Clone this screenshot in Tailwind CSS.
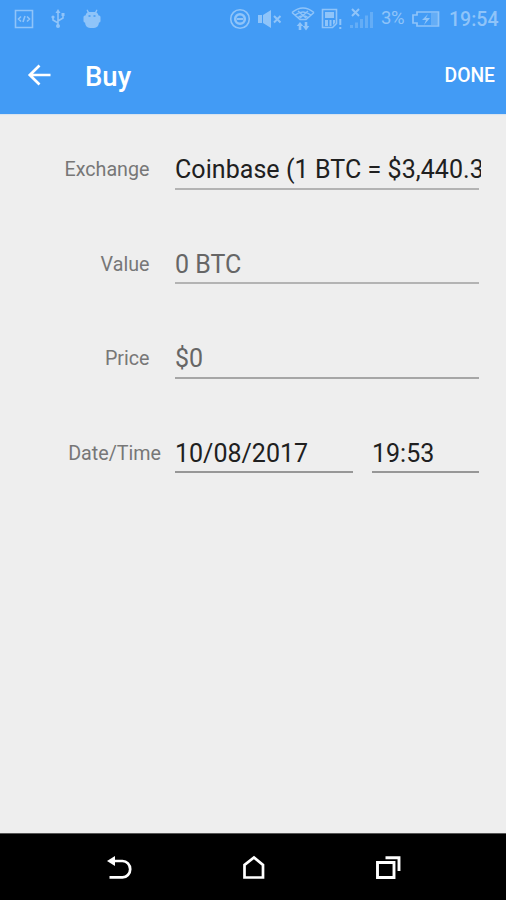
<!DOCTYPE html>
<html lang="en">
<head>
<meta charset="utf-8">
<title>Buy</title>
<script src="https://cdn.jsdelivr.net/npm/@tailwindcss/browser@4"></script>
</head>
<body class="w-[506px] h-[900px] overflow-hidden flex flex-col bg-[#eeeeee] font-[Roboto,sans-serif]">
<header class="h-[114px] shrink-0 bg-[#429bf5] text-white shadow-[0_1px_1px_#d9e3ee]">
  <div class="h-[37px] flex items-center text-[#8fc4f9]">
    <svg class="ml-[14px] w-5 h-5 shrink-0" viewBox="0 0 20 20" fill="none" stroke="currentColor" stroke-width="1.6"><path d="M1.500 1.500h17v17h-17zM7 7.500 4.500 10 7 12.500M13 7.500 15.500 10 13 12.500M11 7 9 13"/></svg>
    <svg class="ml-4 w-4 h-5 shrink-0" viewBox="0 0 16 20" fill="none" stroke="currentColor" stroke-width="1.600"><path d="M8 3v14M8 14 3 11V8M8 12l5-3V6"/><path fill="currentColor" stroke="none" d="m8 0 2.500 4h-5zM11.500 4h3v3h-3z"/><circle cx="3" cy="8" r="1.600" fill="currentColor" stroke="none"/><circle cx="8" cy="17" r="2" fill="currentColor" stroke="none"/></svg>
    <svg class="ml-[17px] w-[18px] h-5 shrink-0" viewBox="0 0 18 20" fill="currentColor"><path d="M4.500.5 6 3h6L13.500.500l1 .500-1 2.500q1.800 1 2 3h.500q1.500 0 1.500 1.500v4q0 1.500-1.500 1.500-.500 5-5 5.500H7q-4.500-.500-5-5.500-1.500 0-1.500-1.500V8Q.500 6.500 2 6.500h.500q.200-2 2-3L3.500 1z"/><path d="M5.500 7h2M10.500 7h2" stroke="#429bf5" stroke-width="1.300"/></svg>
    <svg class="ml-[128px] w-[22px] h-[22px] shrink-0" viewBox="0 0 22 22" fill="none" stroke="currentColor"><circle cx="11" cy="11" r="9.300" stroke-width="1.600"/><circle cx="11" cy="11" r="4.800" stroke-width="2.600"/><path d="M8 11h6" stroke-width="2"/></svg>
    <svg class="ml-[7px] w-6 h-5 shrink-0" viewBox="0 0 24 20"><path d="M0 6h4v8H0zM5 6l8-5v18l-8-5z" fill="currentColor"/><path d="m16 7 6.500 6.500M22.500 7 16 13.500" stroke="currentColor" stroke-width="2"/></svg>
    <svg class="ml-[9px] w-6 h-6 shrink-0" viewBox="0 0 24 24" fill="none" stroke="currentColor" stroke-width="1.500"><path d="M1 5.500q11-9 22 0M3.500 8.500q8.500-7 17 0M6.500 11q5.500-5 11 0M1 5.500 9 12.500h6l8-7M7 4l8 7M17 4l-8 7"/><path fill="currentColor" stroke="none" d="m9 15 3.300 4h-2v4H7.700v-4h-2zM13.700 15h2.600v4h2L15 23.500l-3.300-4.500h2z"/></svg>
    <svg class="ml-[6px] w-[21px] h-[22px] shrink-0" viewBox="0 0 21 22" fill="none" stroke="currentColor" stroke-width="1.600"><path d="M1.500 1.500h14v14l-4 4h-10z"/><path fill="currentColor" stroke="none" d="M4 4h9v6H4zM4 12h3v6H4zM8.500 12h2v6h-2zM12 12h2v3l-2 2zM18.300 11h2v6h-2zM18.300 19h2v2h-2z"/></svg>
    <svg class="ml-[8px] w-[23px] h-[22px] shrink-0" viewBox="0 0 23 22"><path d="m2 1 7 7M9 1 2 8" stroke="currentColor" stroke-width="2"/><path fill="currentColor" fill-opacity=".45" d="M0 17h3v3H0zM5 14.500h3V20H5zM10 11h3v9h-3zM15 7.500h3V20h-3zM20 4h3v16h-3z"/></svg>
    <span class="ml-[8px] w-[27px] text-[18.500px] whitespace-nowrap tracking-[-0.5px]">3%</span>
    <svg class="ml-[3px] w-[29px] h-[18px] shrink-0" viewBox="0 0 29 18"><path d="M6 2h21.500v14H6v-3H2V5h4z" fill="none" stroke="currentColor" stroke-width="1.700"/><path fill="currentColor" d="m17 4-6 6h4l-2 5 6-7h-4z"/><path fill="currentColor" fill-opacity=".45" d="M20 3h7v12h-7z"/></svg>
    <time class="ml-[9px] pt-[2px] text-[19.500px] font-medium whitespace-nowrap">19:54</time>
  </div>
  <div class="h-[77px] flex items-center">
    <svg class="ml-[27px] w-6 h-6 shrink-0" viewBox="0 0 24 24" fill="none" stroke="white" stroke-width="2.700"><path d="M12.500 1.500 2.800 11 12.500 20.500M3 11h20.500"/></svg>
    <h1 class="ml-[34px] pt-[2px] text-[27.500px] font-medium leading-8">Buy</h1>
    <button class="ml-auto mr-[11px] pt-px text-[19.300px] font-medium leading-6">DONE</button>
  </div>
</header>
<main class="flex-1 pt-[37px] text-[#202020]">
  <div class="flex h-[94.670px] items-start">
    <span class="w-[149.500px] text-right text-[19.700px] leading-[38px] text-[#777]">Exchange</span>
    <div class="ml-[25.500px] w-[304px] h-[38.500px] border-b-2 border-[#b3b3b3]"><div class="w-[306px] overflow-hidden whitespace-nowrap text-[25px] tracking-[0.06px] leading-[38px]">Coinbase (1 BTC = $3,440.39)</div></div>
  </div>
  <div class="flex h-[94.670px] items-start">
    <span class="w-[149.500px] text-right text-[19.700px] leading-[38px] text-[#777]">Value</span>
    <div class="ml-[25.500px] w-[304px] h-[38.500px] border-b-2 border-[#b3b3b3] text-[25px] leading-[38px] text-[#666]">0 BTC</div>
  </div>
  <div class="flex h-[94.670px] items-start">
    <span class="w-[149.500px] text-right text-[19.700px] leading-[38px] text-[#777]">Price</span>
    <div class="ml-[25.500px] w-[304px] h-[38.500px] border-b-2 border-[#a6a6a6] text-[25px] leading-[38px] text-[#666]">$0</div>
  </div>
  <div class="flex h-[94.670px] items-start">
    <span class="w-[161px] text-right text-[19.700px] leading-[38px] text-[#777]">Date/Time</span>
    <div class="ml-[14px] w-[178px] h-[38.500px] border-b-2 border-[#979797] text-[25px] leading-[38px]">10/08/2017</div>
    <div class="ml-[19px] w-[107px] h-[38.500px] border-b-2 border-[#979797] text-[25px] leading-[38px]">19:53</div>
  </div>
</main>
<nav class="h-[67px] shrink-0 bg-black border-t border-[#555] flex items-center">
  <svg class="ml-[106px] w-[27px] h-[26px]" viewBox="0 0 27 26" fill="none" stroke="white" stroke-width="2.700"><path d="M7 7h9.500a7.700 8.200 0 0 1 0 16.400H3.500"/><path fill="white" stroke="none" d="M1 7 9 2v10z"/></svg>
  <svg class="ml-[109px] w-[24px] h-[26px]" viewBox="0 0 24 26" fill="none" stroke="white" stroke-width="2.700"><path d="M2.500 23.500V11L12 3.500l9 7.500V23.500z"/></svg>
  <svg class="ml-[109px] w-[28px] h-[26px]" viewBox="0 0 28 26" fill="none" stroke="white" stroke-width="2.900"><path d="M2.500 8.500h16.500v15H2.500z"/><path d="M10.500 3.800H24V17"/></svg>
</nav>
</body>
</html>
